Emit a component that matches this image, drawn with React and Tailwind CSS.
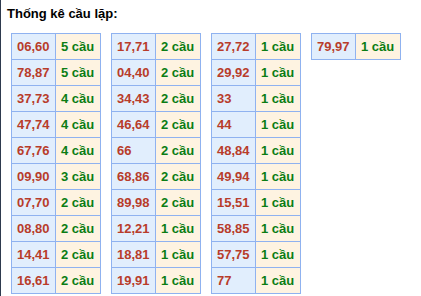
import React from 'react';

// Repeat-pair stats, grouped into columns of ten
const columns = [
  [['06,60', 5], ['78,87', 5], ['37,73', 4], ['47,74', 4], ['67,76', 4], ['09,90', 3], ['07,70', 2], ['08,80', 2], ['14,41', 2], ['16,61', 2]],
  [['17,71', 2], ['04,40', 2], ['34,43', 2], ['46,64', 2], ['66', 2], ['68,86', 2], ['89,98', 2], ['12,21', 1], ['18,81', 1], ['19,91', 1]],
  [['27,72', 1], ['29,92', 1], ['33', 1], ['44', 1], ['48,84', 1], ['49,94', 1], ['15,51', 1], ['58,85', 1], ['57,75', 1], ['77', 1]],
  [['79,97', 1]],
];

function StatTable({ rows }) {
  return (
    <table className="w-[89px] border-collapse table-fixed">
      <tbody>
        {rows.map(([pair, count]) => (
          <tr key={pair} className="h-[26px]">
            <td className="w-[44px] border border-[#8fb2f0] bg-[#e1eefd] pl-[5px] text-[#b83c2a] font-bold">{pair}</td>
            <td className="w-[45px] border border-[#8fb2f0] bg-[#fef3e1] pl-[5px] text-[#0b7d14] font-bold whitespace-nowrap">{count} cầu</td>
          </tr>
        ))}
      </tbody>
    </table>
  );
}

export default function App() {
  return (
    <div className="w-[421px] h-[296px] bg-white border-l border-[#2e3a4e] font-['Liberation_Sans',Arial,sans-serif] text-[13px] leading-none">
      <div className="pl-[6px] pt-[6px] text-[13px] font-bold text-black leading-[16px]">Thống kê cầu lặp:</div>
      <div className="flex items-start gap-[10px] pl-[10px] mt-[11px]">
        {columns.map((rows, i) => (
          <StatTable key={i} rows={rows} />
        ))}
      </div>
    </div>
  );
}
